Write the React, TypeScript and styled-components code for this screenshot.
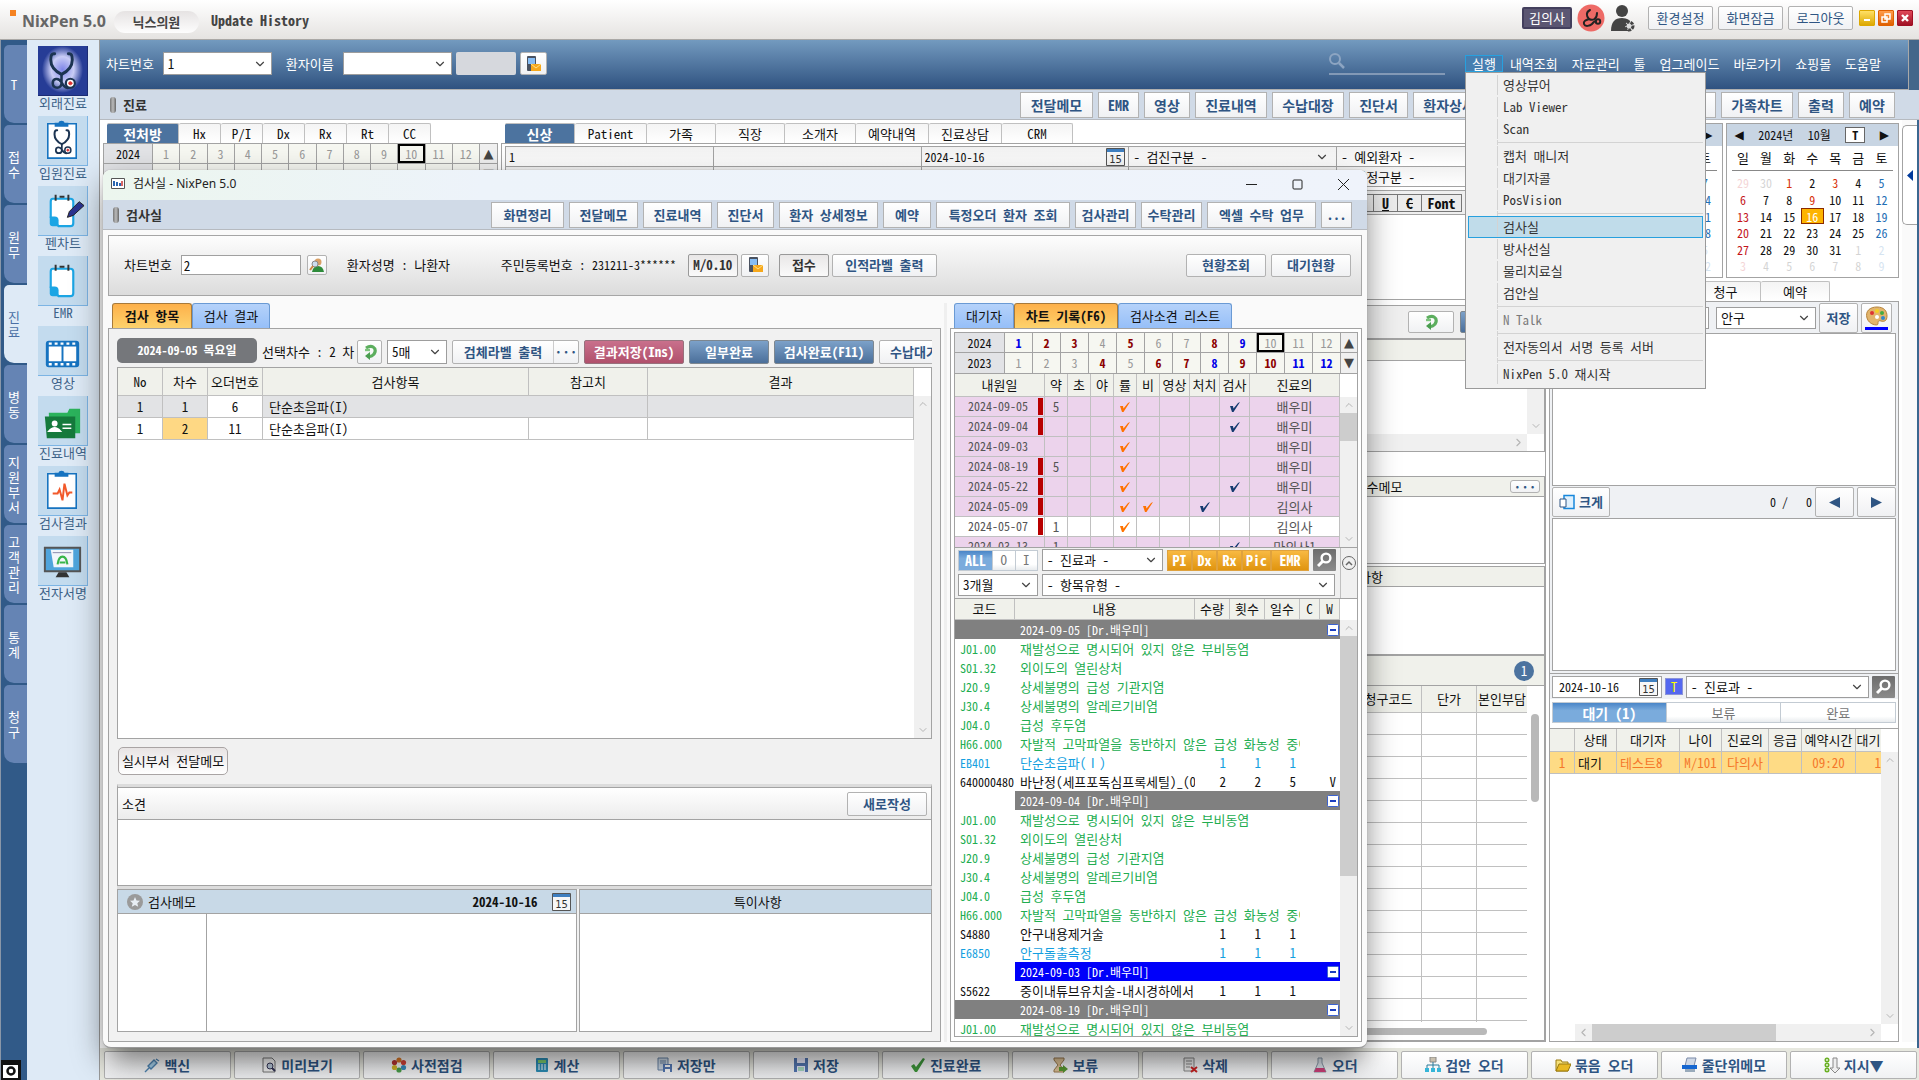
import React from "react";
import styled, { createGlobalStyle, css } from "styled-components";
import { ChevronDown, ChevronUp, ChevronLeft, ChevronRight } from "lucide-react";

const FONT = `"Noto Sans Mono CJK KR", "Noto Sans CJK KR", "Liberation Sans", sans-serif`;
const line = "#a3a3a3";
const soft = "#c0c0c0";
const navy = "#2f5583";
const beige = "#f0f1eb";

const Global = createGlobalStyle`
  *, *::before, *::after { box-sizing: border-box; }
  body { margin: 0; background: #fff; font: 13px/16px ${FONT}; color: #111; }
  button, input, select, textarea { font: inherit; color: inherit; margin: 0; padding: 0; border-radius: 0; }
  ul { list-style: none; margin: 0; padding: 0; }
  h1, h2, p { margin: 0; font-size: 13px; line-height: 16px; }
  svg { display: block; flex: none; }
`;

/* ---------- shell ---------- */
const Shell = styled.div`
  display: flex;
  flex-direction: column;
  height: 100vh;
  overflow: hidden;
  white-space: nowrap;
`;
const TopBar = styled.header`
  flex: none;
  height: 40px;
  display: flex;
  align-items: center;
  padding: 0 6px 4px 10px;
  background: linear-gradient(#fff, #e5e3e1);
  border-bottom: 1px solid #aaa8a6;
`;
const Brand = styled.div`
  display: flex;
  gap: 6px;
  font: bold 16px/22px "Noto Sans", "Open Sans", sans-serif;
  color: #666;
  margin-top: 6px;
  &::before { content: ""; width: 6px; height: 6px; background: #f58220; }
`;
const ClinicPill = styled.span`
  margin: 8px 12px 0 8px;
  width: 85px;
  height: 22px;
  border-radius: 11px;
  background: linear-gradient(#e6e3e3, #fdfdfd);
  text-align: center;
  font: bold 13px/21px ${FONT};
  color: #444;
`;
const History = styled.strong`
  font-size: 14px;
  margin-top: 4px;
  color: #444;
`;
const TopTools = styled.div`
  margin-left: auto;
  display: flex;
  align-items: center;
  gap: 5px;
`;
const UserChip = styled.span`
  height: 22px;
  padding: 0 5px;
  border: 2px solid #433f5d;
  border-radius: 2px;
  background: #5b5672;
  color: #fff;
  line-height: 18px;
`;
const WinBtns = styled.span`
  display: flex;
  gap: 3px;
  margin-left: 1px;
`;
const WinBtn = styled.button<{ $c: string; $d: string }>`
  width: 16px;
  height: 16px;
  border: 1px solid ${(p) => p.$d};
  border-radius: 1px;
  background: linear-gradient(${(p) => p.$c}, ${(p) => p.$d});
  display: grid;
  place-items: center;
`;
const Body = styled.div`
  flex: 1;
  min-height: 0;
  display: flex;
`;

/* ---------- left navigation ---------- */
const SideTabs = styled.nav`
  flex: none;
  width: 27px;
  background: #315a88;
  border-left: 1px solid #8a97a8;
  padding: 5px 0 0 3px;
  display: flex;
  flex-direction: column;
  gap: 2px;
`;
const SideTab = styled.button<{ $on?: boolean }>`
  height: 78px;
  border: 0;
  border-radius: 5px 0 0 10px;
  background: ${(p) => (p.$on ? "#deeaf6" : "#6584b4")};
  color: ${(p) => (p.$on ? "#4a6fa5" : "#fff")};
  display: flex;
  flex-direction: column;
  align-items: center;
  justify-content: center;
  padding-right: 3px;
  line-height: 15px;
`;
const TabFoot = styled.div`
  margin: auto 0 0 -3px;
  width: 20px;
  height: 20px;
`;
const SideIcons = styled.nav`
  flex: none;
  width: 73px;
  background: #deeaf6;
  border-right: 1px solid #9a9a9a;
  padding: 6px 11px;
  display: flex;
  flex-direction: column;
  align-items: center;
`;
const SideItem = styled.button<{ $on?: boolean }>`
  height: 70px;
  width: 50px;
  border: 0;
  background: none;
  color: #3d6288;
  display: flex;
  flex-direction: column;
  align-items: center;
  line-height: 13px;
  & > svg {
    background: ${(p) => (p.$on ? "#263c96" : "#c3dbee")};
    border: solid;
    border-width: 0 1px 1px 0;
    border-color: ${(p) => (p.$on ? "#1c2c74" : "#7cb4e4")};
  }
`;

/* ---------- shared controls ---------- */
const Btn = styled.button<{ $w?: number; $h?: number; $tone?: string; $r?: number; $big?: boolean }>`
  flex: none;
  display: inline-flex;
  align-items: center;
  justify-content: center;
  gap: 4px;
  ${(p) => p.$w && css`width: ${p.$w}px;`}
  height: ${(p) => p.$h || 24}px;
  border: 1px solid #b2b2b2;
  border-radius: ${(p) => (p.$r === undefined ? 2 : p.$r)}px;
  background: linear-gradient(#fff, #f0f1f3);
  color: ${navy};
  font-weight: bold;
  font-size: ${(p) => (p.$big ? 14 : 13)}px;
  ${(p) => p.$tone === "blue" && css`background: linear-gradient(#7ca1c9, #4b6f9a); color: #fff; border-color: #7d8790;`}
  ${(p) => p.$tone === "rose" && css`background: linear-gradient(#c9708c, #b0506c); color: #fff; border-color: #97707c;`}
  ${(p) => p.$tone === "grey" && css`background: linear-gradient(#e9e7e7, #fafafa); color: #333; border-color: #999;`}
  ${(p) => p.$tone === "plain" && css`font-weight: normal;`}
`;
const PickWrap = styled.span<{ $w?: number; $h?: number; $flat?: boolean }>`
  display: inline-grid;
  flex: none;
  width: ${(p) => (p.$w ? p.$w + "px" : "auto")};
  height: ${(p) => p.$h || 22}px;
  border: ${(p) => (p.$flat ? "0" : "1px solid #9d9d9d")};
  background: ${(p) => (p.$flat ? "transparent" : "#fff")};
  color: #111;
  & > * { grid-area: 1 / 1; min-width: 0; }
  & > svg { align-self: center; justify-self: end; margin-right: 4px; pointer-events: none; color: #444; }
  select { appearance: none; border: 0; background: transparent; padding: 0 4px; outline: 0; width: 100%; }
`;
const Pick = ({ v, label, w, h, flat, id }: { v: string; label?: string; w?: number; h?: number; flat?: boolean; id?: string }) => (
  <PickWrap $w={w} $h={h} $flat={flat}>
    <select aria-label={label} id={id}><option>{v}</option></select>
    <ChevronDown size={14} />
  </PickWrap>
);
const TextBox = styled.input<{ $w: number; $h: number }>`
  flex: none;
  width: ${(p) => p.$w}px;
  height: ${(p) => p.$h}px;
  border: 1px solid #a0a0a0;
  background: #fff;
  color: #111;
  padding: 0 2px;
`;

/* ---------- scroll bars ---------- */
const Track = styled.div<{ $row?: boolean }>`
  flex: none;
  display: flex;
  flex-direction: ${(p) => (p.$row ? "row" : "column")};
  align-items: center;
  justify-content: space-between;
  ${(p) => (p.$row ? "height: 17px; padding: 0 2px;" : "width: 17px; padding: 2px 0;")}
  background: #f0f0f0;
  color: #b5b5b5;
`;
const Thumb = styled.div<{ $size: string; $row?: boolean }>`
  ${(p) => (p.$row ? `width: ${p.$size}; height: 17px;` : `height: ${p.$size}; width: 17px;`)}
  margin: 2px;
  background: #cdcdcd;
`;
const Fill = styled.div`flex: 1; min-width: 0; min-height: 0;`;
const VScroll = ({ thumb }: { thumb?: string }) => (
  <Track>
    <ChevronUp size={12} />
    {thumb && <Thumb $size={thumb} />}
    <Fill />
    <ChevronDown size={12} />
  </Track>
);
const HScroll = ({ thumb }: { thumb?: string }) => (
  <Track $row>
    <ChevronLeft size={13} />
    {thumb && <Thumb $row $size={thumb} />}
    <Fill />
    <ChevronRight size={13} />
  </Track>
);

/* ---------- main column ---------- */
const Main = styled.main`
  position: relative;
  flex: 1;
  min-width: 0;
  display: flex;
  flex-direction: column;
`;
const Toolbar = styled.div`
  flex: none;
  height: 50px;
  display: flex;
  align-items: center;
  padding: 0 20px 2px 6px;
  margin-right: 10px;
  background: linear-gradient(#739abf, #2f5280);
  border-right: 1px solid #a9a9a9;
  border-bottom: 1px solid #b0b0b0;
  box-shadow: 10px 0 #44668a;
  color: #fff;
  label { margin-right: 9px; }
`;
const DeadBox = styled.span`
  width: 60px;
  height: 23px;
  margin: 0 4px;
  border-radius: 2px;
  background: #d6d8dd;
`;
const Search = styled.span`
  width: 116px;
  margin-left: auto;
  margin-right: 20px;
  height: 22px;
  border-bottom: 2px solid #8299b6;
`;
const MenuBar = styled.nav`
  display: flex;
  position: relative;
`;
const MenuTop = styled.button<{ $on?: boolean }>`
  height: 17px;
  padding: 0 6px;
  border: 1px solid ${(p) => (p.$on ? "#27a0de" : "transparent")};
  background: ${(p) => (p.$on ? "#467eb0" : "none")};
  line-height: 14px;
`;
const Drop = styled.ul`
  position: absolute;
  z-index: 5;
  left: 0;
  top: 17px;
  width: 241px;
  padding: 1px 2px 3px;
  background: #f0f0f0;
  border: 1px solid #9a9a9a;
  color: #333;
`;
const DropItem = styled.button<{ $on?: boolean; $off?: boolean }>`
  display: flex;
  width: 100%;
  height: 22px;
  padding: 0 0 0 28px;
  border: 1px solid ${(p) => (p.$on ? "#27a0de" : "transparent")};
  background: ${(p) => (p.$on ? "#c0dcea" : "none")};
  color: ${(p) => (p.$off ? "#7a7a7a" : "#333")};
  line-height: 20px;
  span { border-left: 1px solid #d3d3d3; padding-left: 5px; }
`;
const DropRule = styled.li`
  height: 5px;
  margin-left: 29px;
  border-left: 1px solid #d3d3d3;
  background: linear-gradient(#d3d3d3, #d3d3d3) 0 2px / 100% 1px no-repeat;
`;
const SectionBar = styled.div<{ $pad?: number }>`
  flex: none;
  height: 30px;
  display: flex;
  align-items: center;
  gap: 5px;
  padding: 0 ${(p) => p.$pad}px 0 10px;
  background: #d0dae7;
  border-bottom: 1px solid #b6bac0;
`;
const Grip = styled.i`
  width: 6px;
  height: 16px;
  border-radius: 3px;
  background: linear-gradient(90deg, #777, #bbb, #666);
`;
const SectionTitle = styled.h2`
  margin: 0 auto 0 2px;
  color: #333;
`;
const Content = styled.div`
  flex: 1;
  min-height: 0;
  display: flex;
  gap: 3px;
  padding: 3px 0 6px 3px;
  background: #fff;
  border-right: 2px solid #3b6790;
`;
const Col = styled.section<{ $w?: number }>`
  ${(p) => (p.$w ? css`flex: none; width: ${p.$w}px;` : css`flex: 1;`)}
  min-width: 0;
  min-height: 0;
  display: flex;
  flex-direction: column;
`;
const Tabs = styled.div`
  flex: none;
  display: flex;
  padding-left: 4px;
  height: 20px;
`;
const Tab = styled.button<{ $w: number; $on?: boolean }>`
  width: ${(p) => p.$w}px;
  border: 1px solid ${soft};
  border-width: 1px 1px 0 0;
  border-radius: 2px 2px 0 0;
  background: ${(p) => (p.$on ? "#4c739f" : "linear-gradient(#f4f4f4, #fff)")};
  color: ${(p) => (p.$on ? "#fff" : "#111")};
  font-weight: ${(p) => (p.$on ? "bold" : "normal")};
  font-size: ${(p) => (p.$on ? 14 : 13)}px;
  line-height: 18px;
`;
const Panel = styled.div<{ $pad?: string; $bg?: string }>`
  flex: 1;
  min-height: 0;
  display: flex;
  flex-direction: column;
  border: 1px solid ${line};
  padding: ${(p) => p.$pad || "0"};
  background: ${(p) => p.$bg || "#fff"};
`;

/* ---------- tables ---------- */
const Table = styled.table`
  width: 100%;
  border-collapse: separate;
  border-spacing: 0;
  table-layout: fixed;
  th { font-weight: normal; padding: 0; overflow: hidden; }
  td { padding: 0; overflow: hidden; text-align: center; }
`;
const YearTable = styled(Table)`
  flex: none;
  font-size: 12px;
  border: solid ${line};
  border-width: 1px 0 0 1px;
  th, td { height: 20px; border: solid ${line}; border-width: 0 1px 1px 0; }
  tr + tr > * { height: 21px; }
  th { background: #e2e3e6; }
  td { background: #f6f7f1; color: #999; }
  td.b { color: #0000e8; font-weight: bold; }
  td.r { color: #8b0000; font-weight: bold; }
  td.now { box-shadow: inset 0 0 0 2px #000; }
  td.arrow { background: #f0f0f0; color: #444; font: 13px/16px "DejaVu Sans", sans-serif; }
`;
const YearGrid = ({ years, first, last }: { years: [string, string][]; first: number; last: number }) => (
  <YearTable>
    <colgroup>
      <col style={{ width: first }} />
      {Array.from({ length: 12 }, (_, i) => <col key={i} />)}
      <col style={{ width: last }} />
    </colgroup>
    <tbody>
      {years.map(([y, marks], r) => (
        <tr key={y}>
          <th scope="row">{y}</th>
          {marks.split("").map((m, i) => (
            <td key={i} className={m === "b" ? "b" : m === "r" ? "r" : m === "n" ? "now" : ""}>{i + 1}</td>
          ))}
          <td className="arrow">{r ? "▼" : "▲"}</td>
        </tr>
      ))}
    </tbody>
  </YearTable>
);

/* ---------- background form ---------- */
const FormGrid = styled.div`
  flex: none;
  display: grid;
  grid-template-columns: repeat(5, 1fr);
  border: solid ${line};
  border-width: 1px 0 0 1px;
`;
const FormCell = styled.div`
  height: 20px;
  display: flex;
  align-items: center;
  justify-content: space-between;
  padding: 0 3px 0 0;
  border: solid ${line};
  border-width: 0 1px 1px 0;
  background: linear-gradient(#f1f1f1, #fff);
  & > input { border: 0; background: none; width: 100px; height: 18px; padding: 0 3px; font-size: 12px; }
  & > span { flex: 1; }
`;
const RichBar = styled.div`
  flex: none;
  height: 25px;
  margin-top: 3px;
  padding: 3px 83px 0 0;
  display: flex;
  justify-content: flex-end;
  background: #efefef;
  border: 1px solid ${line};
`;
const RichBtn = styled.button<{ $w: number }>`
  width: ${(p) => p.$w}px;
  height: 18px;
  margin-right: -1px;
  border: 1px solid #777;
  background: #ececec;
  font-weight: bold;
  font-size: 14px;
  line-height: 15px;
`;
const Area = styled.div<{ $h?: number; $grow?: boolean }>`
  ${(p) => (p.$grow ? css`flex: 1; min-height: 0;` : css`flex: none; height: ${p.$h}px;`)}
  border: 1px solid ${line};
  border-top: 0;
  background: #fff;
`;
const ActionBar = styled.div`
  flex: none;
  height: 34px;
  margin-top: 5px;
  padding: 0 39px 0 0;
  display: flex;
  align-items: center;
  justify-content: flex-end;
  gap: 6px;
  background: #efefef;
  border: 1px solid ${line};
`;
const BeigeHead = styled.div<{ $h: number }>`
  flex: none;
  height: ${(p) => p.$h}px;
  display: flex;
  align-items: center;
  justify-content: space-between;
  padding: 0 4px;
  background: ${beige};
  border: 1px solid ${line};
`;
const ScrollArea = styled.div`
  flex: none;
  height: 91px;
  display: grid;
  grid-template-columns: 1fr 17px;
  grid-template-rows: 1fr 17px;
  border: 1px solid ${line};
  border-top: 0;
`;
const Right = styled.div`
  width: 215px;
  margin-left: auto;
  display: flex;
  flex-direction: column;
  flex: none;
`;
const Count = styled.span`
  width: 20px;
  height: 20px;
  margin-right: 6px;
  border-radius: 50%;
  background: #4c739f;
  color: #fff;
  text-align: center;
  line-height: 19px;
`;
const MiniDots = styled(Btn)`
  height: 13px;
  width: 30px;
  border-radius: 3px;
  line-height: 8px;
`;
const Spacer = styled.div<{ $h: number }>`flex: none; height: ${(p) => p.$h}px;`;
const OrderWrap = styled.div`
  flex: 1;
  min-height: 0;
  display: grid;
  grid-template-columns: 1fr 17px;
  grid-template-rows: minmax(0, 1fr) 18px;
  border: 1px solid ${line};
  border-top: 0;
`;
const OrderTable = styled(Table)`
  th { height: 27px; background: ${beige}; border: solid ${soft}; border-width: 0 1px 1px 0; }
  td { height: 22px; border: solid ${soft}; border-width: 0 1px 1px 0; }
  th:last-child, td:last-child { border-right: 0; }
`;
const Clip = styled.div`flex: 1; min-width: 0; overflow: hidden;`;
const PillTrack = styled.div`
  padding: 28px 5px 0 4px;
  &::before { content: ""; display: block; height: 88px; border-radius: 4px; background: #b9b9b9; }
`;
const PillRow = styled.div`
  padding: 6px 40px 0 4px;
  &::before { content: ""; display: block; height: 7px; border-radius: 4px; background: #b9b9b9; }
`;

/* ---------- calendars ---------- */
const CalPair = styled.div`
  flex: none;
  display: grid;
  grid-template-columns: 1fr 1fr;
  gap: 3px;
  margin-bottom: 3px;
`;
const Cal = styled.div`
  height: 155px;
  border: 1px solid ${line};
`;
const CalHead = styled.div`
  height: 22px;
  display: flex;
  align-items: center;
  justify-content: space-between;
  padding: 0 9px 0 8px;
  font-size: 12px;
  background: #c8d5e3;
  span { font: 12px/16px "DejaVu Sans", sans-serif; }
  button { width: 20px; height: 16px; border: 1px solid #666; background: #fff; font-weight: bold; line-height: 12px; }
`;
const CalTable = styled(Table)`
  padding: 0 5px;
  font-size: 12px;
  th { height: 25px; border-bottom: 1px solid #888; font-size: 13px; }
  td { height: 16px; line-height: 15px; }
  tbody tr:first-child td { height: 20px; padding-top: 3px; }
  tbody tr:nth-child(even) td { height: 17px; }
  td:first-child { color: #c4161c; }
  td:last-child { color: #1f6fb5; }
  td.h { color: #d8320a; }
  td.o { opacity: 0.18; }
  td.t { background: #fdb400; color: #fff; box-shadow: inset 0 0 0 1px #8a2a00; }
`;
const weeks = (s: string) => s.trim().split(/\s+/).reduce<string[][]>((a, d, i) => {
  if (i % 7 === 0) a.push([]);
  a[a.length - 1].push(d);
  return a;
}, []);
const Calendar = ({ year, month, days }: { year: string; month: string; days: string }) => (
  <Cal>
    <CalHead><span>◀</span>{year}<time>{month}</time><button>T</button><span>▶</span></CalHead>
    <CalTable>
      <thead><tr>{"일월화수목금토".split("").map((d) => <th key={d} scope="col">{d}</th>)}</tr></thead>
      <tbody>
        {weeks(days).map((w, i) => (
          <tr key={i}>{w.map((d, j) => <td key={j} className={/[a-z]/.test(d) ? d.replace(/\d/g, "") : ""}>{d.replace(/\D/g, "")}</td>)}</tr>
        ))}
      </tbody>
    </CalTable>
  </Cal>
);

const SideBox = styled.div`
  flex: none;
  display: flex;
  flex-direction: column;
  border: 1px solid ${line};
  padding: 0 2px 2px;
  background: #eff1f4;
`;
const SideRow = styled.div<{ $h: number }>`
  height: ${(p) => p.$h}px;
  display: flex;
  align-items: center;
  justify-content: flex-end;
  gap: 3px;
  & > .first { margin-right: auto; }
`;
const WaitRow = styled(SideRow)`
  flex: none;
  padding: 0 3px 0 2px;
  background: #eff1f4;
`;
const Canvas = styled.div`
  height: 153px;
  border: 1px solid ${line};
  background: #fff;
`;
const Palette = styled(Btn)`
  &::after { content: ""; width: 23px; height: 3px; background: #00f; margin-top: -3px; }
  flex-direction: column;
`;
const DateBox = styled.span`
  display: flex;
  align-items: center;
  justify-content: space-between;
  width: 110px;
  height: 22px;
  padding: 0 3px 0 0;
  margin-right: auto;
  border: 1px solid ${line};
  background: #fff;
  input { width: 76px; border: 0; padding: 0 6px; font-size: 12px; }
`;
const BlueT = styled.button`
  width: 18px;
  height: 17px;
  border: 1px solid #8b93d8;
  background: #5468f0;
  color: #ff0;
  line-height: 14px;
`;
const DarkBtn = styled.button`
  width: 23px;
  height: 22px;
  border: 0;
  border-radius: 1px;
  background: linear-gradient(#6d6d6d, #8b8b8b);
  display: grid;
  place-items: center;
`;
const Segments = styled.div`
  flex: none;
  display: grid;
  grid-template-columns: repeat(3, 1fr);
  height: 21px;
  margin: 3px 2px 5px;
`;
const Segment = styled.button<{ $on?: boolean }>`
  border: 1px solid #c3cbd3;
  border-left-width: ${(p) => (p.$on ? 1 : 0)}px;
  background: ${(p) => (p.$on ? "linear-gradient(#4a86c8, #7aabdc 40%)" : "linear-gradient(#fff 70%, #e8ebee)")};
  color: ${(p) => (p.$on ? "#fff" : "#777")};
  font-weight: ${(p) => (p.$on ? "bold" : "normal")};
  font-size: ${(p) => (p.$on ? 14 : 13)}px;
  line-height: 18px;
`;
const WaitBox = styled.div`
  flex: 1;
  min-height: 0;
  display: flex;
  flex-direction: column;
  border: 1px solid ${line};
  border-top: 0;
  background: #fff;
`;
const WaitBody = styled.div`
  flex: 1;
  min-height: 0;
  display: flex;
  border-top: 1px solid ${line};
`;
const WaitTable = styled(Table)`
  th, td { height: 22px; border: solid ${soft}; border-width: 0 1px 1px 0; }
  th { height: 23px; background: ${beige}; }
  td { background: #fedb85; color: #f5772a; }
  td:nth-child(2) { color: #111; text-align: left; padding-left: 3px; }
  td:nth-child(3) { text-align: left; padding-left: 3px; }
  td:last-child { text-align: right; }
  th:last-child, td:last-child { border-right: 0; }
`;
const HScrollRow = styled.div`
  flex: none;
  display: grid;
  grid-template-columns: 25px 1fr 17px;
`;
const Strip = styled.aside`
  flex: none;
  width: 15px;
  margin: -3px 0 0;
  padding-top: 5px;
  background: #fafafa;
`;
const StripTab = styled.button`
  height: 100px;
  width: 15px;
  border: 1px solid ${line};
  border-right: 0;
  border-radius: 5px 0 0 5px;
  background: #fff;
  display: grid;
  place-items: center;
`;

/* ---------- bottom bar ---------- */
const BottomBar = styled.footer`
  flex: none;
  height: 32px;
  display: grid;
  grid-template-columns: repeat(14, 1fr);
  gap: 3px;
  padding: 3px 2px 1px 4px;
  background: #e7e8df;
`;
const FootBtn = styled(Btn)`
  width: auto;
  height: 28px;
`;

/* ---------- exam window ---------- */
const Win = styled.section`
  position: absolute;
  z-index: 2;
  left: 3px;
  right: 552px;
  top: 130px;
  bottom: 32px;
  display: flex;
  flex-direction: column;
  overflow: hidden;
  border-radius: 8px;
  background: #fafafa;
  border-bottom: 1px solid #999;
`;
const WinShadow = styled(Win)`
  z-index: 1;
  overflow: visible;
  box-shadow: 0 0 1px #777, 0 12px 32px rgba(0, 0, 0, 0.4), 0 24px 24px -12px rgba(0, 0, 0, 0.25);
`;
const WinTitle = styled.header`
  flex: none;
  height: 30px;
  display: flex;
  align-items: center;
  gap: 6px;
  padding: 0 16px 2px 8px;
  background: linear-gradient(90deg, #ecf6ee, #edf3fa 30%, #eff3fb);
  h1 { font: 12px/16px "Noto Sans", "Noto Sans CJK KR", sans-serif; margin-right: auto; color: #222; }
  button { width: 16px; height: 16px; margin-left: 24px; border: 0; background: none; display: grid; place-items: center; }
`;
const Patient = styled.div`
  flex: none;
  height: 61px;
  margin: 5px 5px 0;
  padding: 0 10px 1px 15px;
  display: flex;
  align-items: center;
  border: 1px solid #a6a6a6;
  background: linear-gradient(#fdfdfd, #dcdcdc);
  label { margin-right: 9px; }
`;
const Info = styled.span<{ $w: number }>`width: ${(p) => p.$w}px; flex: none;`;
const Digits = styled.span`font-size: 12px;`;
const Gap = styled.i<{ $w: number }>`width: ${(p) => p.$w}px; flex: none;`;
const WinBody = styled.div`
  flex: 1;
  min-height: 0;
  display: grid;
  grid-template-columns: 1fr 3px 412px;
  grid-template-rows: minmax(0, 1fr);
  column-gap: 3px;
  padding: 7px 5px 5px;
`;
const Splitter = styled.div`background: #efefef;`;
const BigTabs = styled.div`
  flex: none;
  display: flex;
  height: 25px;
  padding-left: 4px;
`;
const BigTab = styled.button<{ $w: number; $on?: boolean }>`
  width: ${(p) => p.$w}px;
  border: 1px solid ${(p) => (p.$on ? "#a77a3b" : "#6a9ad4")};
  border-bottom: 0;
  border-radius: 3px 3px 0 0;
  background: ${(p) => (p.$on ? "linear-gradient(#fdb04a, #fdd26c)" : "linear-gradient(#b5d2fa, #96bff8)")};
  font-weight: ${(p) => (p.$on ? "bold" : "normal")};
`;
const ExamBar = styled.div`
  flex: none;
  display: flex;
  align-items: center;
  gap: 5px;
  height: 30px;
  overflow: hidden;
`;
const DateChip = styled.span`
  flex: none;
  width: 140px;
  height: 25px;
  margin-bottom: 4px;
  border-radius: 5px;
  background: #75777b;
  color: #fff;
  font-weight: bold;
  font-size: 12px;
  line-height: 24px;
  text-align: center;
`;
const SplitBtn = styled(Btn)`
  gap: 0;
  span { flex: 1; text-align: center; }
  span + span { flex: none; width: 25px; border-left: 1px solid #ccc; line-height: 22px; }
`;
const ExamBox = styled.div`
  flex: 1;
  min-height: 0;
  display: flex;
  border: 1px solid ${line};
  background: #fff;
`;
const ExamTable = styled(Table)`
  th { height: 28px; background: ${beige}; border: solid ${soft}; border-width: 0 1px 1px 0; }
  td { height: 22px; border: solid ${soft}; border-width: 0 1px 1px 0; }
  td:nth-child(4) { text-align: left; padding-left: 6px; }
  tr.sel td { background: #e2e3e5; }
  tr.sel td:nth-child(3) { background: #fff; }
  tr.sel td:nth-child(4) { border-right: 0; }
  td.hot { background: #fed884; }
`;
const ScrollSlot = styled.div<{ $top?: number }>`
  flex: none;
  padding-top: ${(p) => p.$top || 28}px;
  display: flex;
  & > div { height: 100%; }
`;
const MemoBtn = styled.button`
  flex: none;
  align-self: flex-start;
  width: 110px;
  height: 28px;
  margin: 8px 0 9px 1px;
  border: 1px solid #a9a4a4;
  border-radius: 5px;
  background: linear-gradient(#e8e4e4, #fff);
`;
const Opinion = styled.div`
  flex: none;
  height: 102px;
  border: 1px solid ${line};
  border-top: 3px solid #dcdcdc;
  background: #fff;
  header {
    height: 33px;
    display: flex;
    align-items: center;
    justify-content: space-between;
    padding: 0 4px;
    border: solid ${line};
    border-width: 1px 0;
    background: linear-gradient(#fff, #ececec);
  }
`;
const Memos = styled.div`
  flex: none;
  height: 146px;
  display: grid;
  grid-template-columns: 461fr 353fr;
  gap: 2px;
  border-top: 3px solid #dcdcdc;
`;
const Memo = styled.div`
  display: flex;
  flex-direction: column;
  border: 1px solid ${line};
  background: #fff;
  header {
    height: 24px;
    display: flex;
    align-items: center;
    gap: 5px;
    padding: 0 5px 0 9px;
    background: #c8d9e7;
    border-bottom: 1px solid ${line};
  }
  strong { margin-left: auto; margin-right: 10px; }
  .mid { flex: 1; text-align: center; }
`;
const MemoDates = styled.div`
  flex: 1;
  width: 89px;
  border-right: 1px solid ${line};
`;

/* ---------- chart record side ---------- */
const VisitBox = styled.div`
  flex: none;
  height: 174px;
  display: flex;
  overflow: hidden;
  border: solid ${line};
  border-width: 0 1px 1px;
  & > div { align-self: stretch; }
`;
const VisitTable = styled(Table)`
  th { height: 23px; background: ${beige}; border: solid ${soft}; border-width: 0 1px 1px 0; }
  td { height: 20px; background: #ecd3ec; border: solid ${soft}; border-width: 0 1px 1px 0; color: #555; }
  tr.w td { background: #fff; }
  td svg { margin: 0 auto; }
`;
const VisitDate = styled.div<{ $bar: boolean }>`
  height: 19px;
  font-size: 12px;
  line-height: 18px;
  padding-right: 3px;
  background: ${(p) => (p.$bar ? "linear-gradient(#b80000, #b80000) right 1px center / 5px 17px no-repeat" : "none")};
`;
const Filters = styled.div`
  flex: none;
  display: grid;
  grid-template-columns: 1fr 17px;
  background: #f0f0f0;
  border: solid ${line};
  border-width: 0 1px;
  height: 50px;
`;
const FilterRows = styled.div`
  display: flex;
  flex-direction: column;
  gap: 3px;
  padding: 1px 4px 0 3px;
  border-right: 1px solid ${soft};
  & > div { display: flex; gap: 4px; align-items: center; height: 22px; }
`;
const TinySeg = styled.span`
  display: grid;
  grid-template-columns: 35px 1fr 1fr;
  width: 80px;
  height: 21px;
`;
const Orange = styled.span`
  display: grid;
  grid-template-columns: 25fr 25fr 25fr 29fr 38fr;
  width: 142px;
  height: 21px;
  button {
    border: 1px solid #dfa23e;
    background: linear-gradient(#f8b942, #e0940f);
    color: #fff;
    font-weight: bold;
    font-size: 14px;
    line-height: 17px;
  }
`;
const RxBox = styled.div`
  flex: 1;
  min-height: 0;
  display: flex;
  border: 1px solid ${line};
`;
const RxTable = styled(Table)`
  th { height: 21px; background: ${beige}; border: solid ${soft}; border-width: 0 1px 1px 0; }
  td { height: 19px; line-height: 18px; white-space: pre; text-align: right; padding-right: 4px; }
  td:first-child { text-align: left; padding: 0 0 0 5px; font-size: 12px; }
  td:nth-child(2) { text-align: left; padding: 0 0 0 5px; }
  tr.g td { color: #22ad50; }
  tr.c td { color: #149fe0; }
`;
const GroupRow = styled.tr<{ $c: string; $full: boolean }>`
  && td { background: ${(p) => p.$c}; color: #fff; }
  && td:first-child { background: ${(p) => (p.$full ? p.$c : "#fff")}; }
  && td:nth-child(2) { font-size: 12px; }
  && td:nth-child(2) > div { display: flex; justify-content: space-between; align-items: center; padding-right: 1px; }
`;

/* ---------- drawings ---------- */
const Scope = ({ c = "#1c3452" }: { c?: string }) => (
  <g fill="none" stroke={c} strokeLinecap="round">
    <path d="M17 8h-1c-3 0-3 3-3 6 0 7 5 12 11 15 6-3 11-8 11-15 0-3 0-6-3-6h-1" strokeWidth="3" />
    <path d="M24 29v9c0 6-9 6-9 0 0-5 6-6 9-1 2 4 5 7 9 5" strokeWidth="2.6" />
    <circle cx="33" cy="38" r="4.6" strokeWidth="2.2" fill="#fff" />
    <circle cx="33" cy="38" r="1.6" fill="#d33" stroke="#d33" />
  </g>
);
const Board = ({ children }: { children?: React.ReactNode }) => (
  <>
    <path d="M10 8h29v35H10z" fill="#fff" stroke="#1673c0" strokeWidth="1.6" />
    <path d="M17 7h4c0-3 6-3 6 0h4v4H17z" fill="#1673c0" />
    {children}
  </>
);
const Pad = ({ pen }: { pen?: boolean }) => (
  <>
    <path d="M15 13h18q3 0 3 3v22q0 3-3 3H21l-8-9V16q0-3 2-3z" fill="#fff" stroke="#1ba5e4" strokeWidth="2.2" />
    <path d="M12 31h5q4 0 4 4v6h-6q-3 0-3-3z" fill="#1ba5e4" />
    <path d="M18 9v6M31 9v6M22 11h5" stroke="#333" strokeWidth="2" />
    {pen && <path d="M30 32l2-6 10-10 5 4-11 10z" fill="#2a3390" stroke="#222" />}
  </>
);
const SideArt = ({ k }: { k: number }) => (
  <svg width="50" height="50" viewBox="0 0 50 50">
    {k === 0 && (
      <>
        <defs><radialGradient id="glow"><stop offset="0" stopColor="#7f86e8" /><stop offset=".55" stopColor="#c9cdf6" /><stop offset="1" stopColor="#263c96" /></radialGradient></defs>
        <ellipse cx="25" cy="24" rx="21" ry="24" fill="url(#glow)" /><Scope />
      </>
    )}
    {k === 1 && <Board><g transform="translate(8 9) scale(.68)"><Scope /></g></Board>}
    {k === 2 && <Pad pen />}
    {k === 3 && <Pad />}
    {k === 4 && (
      <>
        <rect x="8" y="15" width="34" height="27" rx="3" fill="#1673c0" />
        <path d="M11 21h13v15H11zM26 21h13v15H26z" fill="#fff" />
        <path d="M11 18h29M11 39h29" stroke="#fff" strokeWidth="2.4" strokeDasharray="3 3" />
      </>
    )}
    {k === 5 && (
      <>
        <path d="M11 17h19l2-4h11v25H12z" fill="#2bb35c" /><path d="M7 21h31v22H9z" fill="#157a3c" />
        <circle cx="17" cy="28" r="3" fill="#fff" /><path d="M11 36q6-7 12 0zM25 29h9M25 33h9" fill="#fff" stroke="#fff" strokeWidth="1.6" />
      </>
    )}
    {k === 6 && <Board><path d="M15 28h5l2-4 3 11 2-17 3 12 2-3h3" fill="none" stroke="#f2592a" strokeWidth="2" /></Board>}
    {k === 7 && (
      <>
        <path d="M7 12h36v24H7z" fill="#4fa4dc" stroke="#555" strokeWidth="2" /><path d="M13 14h23v18H16z" fill="#f2f6fb" />
        <path d="M15 17h19" stroke="#88a" /><path d="M20 29q1-8 5-8t5 8M22 27h6" fill="none" stroke="#39b54a" strokeWidth="2.2" /><path d="M21 37h8l3 5H18z" fill="#333" />
      </>
    )}
  </svg>
);
const PhoneIcon = () => (
  <svg width="18" height="18" viewBox="0 0 18 18"><rect x="3" y="1" width="9" height="15" rx="1" fill="#4a5260" /><rect x="4" y="3" width="7" height="6" fill="#86bdf5" /><path d="M7 9h10v7H7z" fill="#f6a81c" /><path d="M7 9l5 4 5-4" fill="none" stroke="#fde08a" /></svg>
);
const CalIcon = () => (
  <svg width="19" height="18" viewBox="0 0 19 18"><path d="M.5.5h18v17H.5z" fill="#f7f7f7" stroke="#555" /><path d="M1 1h17v3H1z" fill="#3f7fc0" /><text x="9.500" y="15" textAnchor="middle" fontSize="10" fontFamily="DejaVu Sans" fill="#333">15</text></svg>
);
const Refresh = () => (
  <svg width="16" height="16" viewBox="0 0 16 16"><path d="M4 4c6-4 10 0 9 4s-5 5-7 4" fill="none" stroke="#5cae5e" strokeWidth="3.2" /><path d="M8 8v8l-5-4z" fill="#4a9e50" /><path d="M3 6h5" stroke="#7cc47c" strokeWidth="2.4" /></svg>
);
const Lens = () => (
  <svg width="16" height="16" viewBox="0 0 16 16"><circle cx="9" cy="6" r="4.4" fill="none" stroke="#fff" strokeWidth="2.4" /><path d="M6 9l-5 5" stroke="#fff" strokeWidth="3" /></svg>
);
const Tick = ({ c }: { c: string }) => (
  <svg width="10" height="10" viewBox="0 0 10 10"><path d="M0 4h3l.5 2.500L8 1l2-1-6.500 10H2z" fill={c} /></svg>
);
const Minus = () => (
  <svg width="12" height="12" viewBox="0 0 12 12"><rect x=".5" y=".5" width="11" height="11" rx="1" fill="#fff" stroke="#3c63d0" /><path d="M3 6h6" stroke="#1c3fc0" strokeWidth="2" /></svg>
);
const Arrow = ({ left }: { left?: boolean }) => (
  <svg width="11" height="11" viewBox="0 0 10 10"><path d={left ? "M10 0v10L0 5z" : "M0 0v10l10-5z"} fill={navy} /></svg>
);
const footArt: React.ReactNode[] = [
  <path d="M1 15l4-4M4 9l6-6 3 3-6 6zM12 2l3 2" stroke="#4f86b5" fill="#a9d4ee" strokeWidth="1.4" />,
  <><path d="M2 1h9l3 3v11H2z" fill="#f5f5f5" stroke="#777" /><circle cx="9" cy="9" r="3" fill="#bcd" stroke="#335" /><path d="M11 11l3 3" stroke="#335" strokeWidth="2" /></>,
  <g><circle cx="8" cy="3" r="2.600" fill="#e07b28" /><circle cx="12.500" cy="5.500" r="2.600" fill="#d8453a" /><circle cx="12.500" cy="10.500" r="2.600" fill="#3a8fc2" /><circle cx="8" cy="13" r="2.600" fill="#4ba14b" /><circle cx="3.500" cy="10.500" r="2.600" fill="#d6b62a" /><circle cx="3.500" cy="5.500" r="2.600" fill="#b83434" /></g>,
  <><rect x="2" y="1" width="12" height="14" rx="1" fill="#2c8fb8" /><path d="M4 3h8v3H4z" fill="#7fcf6f" /><path d="M4 8h8M4 10h8M4 12h8" stroke="#fff" strokeDasharray="2 1" /></>,
  <><path d="M1 1h10v12H1z" fill="#cfdcea" stroke="#6a86a8" /><path d="M3 4h6M3 6h6" stroke="#6a86a8" /><path d="M6 7h9v8H6z" fill="#5579b5" /><path d="M8 8h5v2H8zM8 12h5v3H8z" fill="#fff" /></>,
  <><path d="M1 1h14v14H1z" fill="#5579b5" /><path d="M4 1h8v5H4zM4 9h8v6H4z" fill="#eef" /><path d="M5 11h6M5 13h6" stroke="#6c8" /></>,
  <path d="M1 9l3-2 2 3 7-9 2 1-8 13H5z" fill="#3f9a3c" />,
  <><path d="M2 1h10v2L8 8l4 5v2H2v-2l4-5-4-5z" fill="#e3c79a" stroke="#9a7a50" /><path d="M7 10h4V8l5 4-5 4v-2H7z" fill="#5a9a32" /></>,
  <><path d="M2 1h10v13H2z" fill="#eee" stroke="#888" /><path d="M4 4h6M4 7h6M4 10h4" stroke="#888" /><path d="M9 10l6 5M15 10l-6 5" stroke="#c22" strokeWidth="2" /></>,
  <><path d="M6 1h4v5l4 9H2l4-9z" fill="#dfe6ee" stroke="#8a9aaa" /><path d="M4 11h8l2 4H2z" fill="#d0407a" /></>,
  <><path d="M5 0h6v5H5z" fill="#c9c0ae" stroke="#888" /><path d="M8 5v3M2 11V8h12v3M8 8v3" stroke="#2a7a9a" fill="none" /><path d="M0 11h4v4H0zM6 11h4v4H6zM12 11h4v4h-4z" fill="#36b5d8" /></>,
  <><path d="M1 3h5l1 2h6v9H1z" fill="#f5e07a" stroke="#9a7a10" /><path d="M4 7h12l-3 7H1z" fill="#e8b923" stroke="#9a7a10" /></>,
  <><path d="M5 1h9l-2 8H3z" fill="#cfd8e6" stroke="#7a8aa8" /><path d="M0 8h15v4H0z" fill="#1566d0" /><path d="M3 12h10v3H3z" fill="#9ab" /></>,
  <><g fill="none" stroke="#6ab023" strokeWidth="1.600"><circle cx="3" cy="3" r="1.700" /><circle cx="3" cy="8" r="1.700" /><circle cx="3" cy="13" r="1.700" /></g><path d="M9 1v10H6l5 5 5-5h-3V1z" fill="#eee" stroke="#888" /></>,
];

/* ---------- data ---------- */
const sideTabs = ["T", "접수", "원무", "진료", "병동", "지원부서", "고객관리", "통계", "청구"];
const sideItems = ["외래진료", "입원진료", "펜차트", "EMR", "영상", "진료내역", "검사결과", "전자서명"];
const menus = ["실행", "내역조회", "자료관리", "툴", "업그레이드", "바로가기", "쇼핑몰", "도움말"];
const drop = ["영상뷰어", "Lab Viewer", "Scan", "-", "캡처 매니저", "대기자콜", "PosVision", "-", "검사실", "방사선실", "물리치료실", "검안실", "-", "N Talk", "-", "전자동의서 서명 등록 서버", "-", "NixPen 5.0 재시작"];
const mainBtns: [string, number][] = [["전달메모", 73], ["EMR", 41], ["영상", 46], ["진료내역", 72], ["수납대장", 72], ["진단서", 59], ["환자상세정보", 98], ["", 200], ["가족차트", 72], ["출력", 46], ["예약", 46]];
const winBtns: [string, number][] = [["화면정리", 73], ["전달메모", 69], ["진료내역", 69], ["진단서", 57], ["환자 상세정보", 99], ["예약", 48], ["특정오더 환자 조회", 134], ["검사관리", 61], ["수탁관리", 61], ["엑셀 수탁 업무", 109], ["...", 31]];
const visits: [string, boolean, string, string, string][] = [
  ["2024-09-05", true, "5", "r---x", "배우미"],
  ["2024-09-04", true, "", "r---x", "배우미"],
  ["2024-09-03", false, "", "r----", "배우미"],
  ["2024-08-19", true, "5", "r----", "배우미"],
  ["2024-05-22", true, "", "r---x", "배우미"],
  ["2024-05-09", true, "", "rr-x-", "김의사"],
  ["2024-05-07", true, "1", "r----", "김의사"],
  ["2024-03-13", false, "1", "----x", "마의사1"],
];
const dx: string[][] = [
  ["g", "J01.00", "재발성으로 명시되어 있지 않은 부비동염"],
  ["g", "S01.32", "외이도의 열린상처"],
  ["g", "J20.9", "상세불명의 급성 기관지염"],
  ["g", "J30.4", "상세불명의 알레르기비염"],
  ["g", "J04.0", "급성 후두염"],
  ["g", "H66.000", "자발적 고막파열을 동반하지 않은 급성 화농성 중이염"],
];
const rx: string[][] = [
  ["G", "2024-09-05", "full"], ...dx,
  ["c", "EB401", "단순초음파(Ⅰ)", "1", "1", "1", "", ""],
  ["k", "640000480", "바난정(세프포독심프록세틸)_(0", "2", "2", "5", "", "V"],
  ["G", "2024-09-04", ""], ...dx,
  ["k", "S4880", "안구내용제거술", "1", "1", "1", "", ""],
  ["c", "E6850", "안구돌출측정", "1", "1", "1", "", ""],
  ["B", "2024-09-03", ""],
  ["k", "S5622", "중이내튜브유치술-내시경하에서", "1", "1", "1", "", ""],
  ["G", "2024-08-19", "full"], dx[0],
];
const footLabels = ["백신", "미리보기", "사전점검", "계산", "저장만", "저장", "진료완료", "보류", "삭제", "오더", "검안 오더", "묶음 오더", "줄단위메모", "지시▼"];
const Cols = ({ w }: { w: (number | null)[] }) => (
  <colgroup>{w.map((n, i) => <col key={i} style={n ? { width: n } : undefined} />)}</colgroup>
);

/* ---------- exam window parts ---------- */
const ExamSide = () => (
  <Col>
    <BigTabs><BigTab $w={80} $on>검사 항목</BigTab><BigTab $w={78}>검사 결과</BigTab></BigTabs>
    <Panel $pad="8px 8px 9px" $bg="#f1f1f1">
      <ExamBar>
        <DateChip>2024-09-05 목요일</DateChip>
        <Info $w={90}>선택차수 : 2 차</Info>
        <Btn $w={25} aria-label="새로고침"><Refresh /></Btn>
        <Pick v="5매" label="매수" w={60} h={24} />
        <SplitBtn $w={127}><span>검체라벨 출력</span><span>···</span></SplitBtn>
        <Btn $w={100} $tone="rose">결과저장(Ins)</Btn>
        <Btn $w={80} $tone="blue">일부완료</Btn>
        <Btn $w={100} $tone="blue">검사완료(F11)</Btn>
        <Btn $w={70}>수납대기</Btn>
      </ExamBar>
      <ExamBox>
        <Clip>
          <ExamTable>
            <Cols w={[45, 45, 55, null, 119, 266]} />
            <thead><tr>{["No", "차수", "오더번호", "검사항목", "참고치", "결과"].map((h) => <th key={h} scope="col">{h}</th>)}</tr></thead>
            <tbody>
              <tr className="sel"><td>1</td><td>1</td><td>6</td><td>단순초음파(I)</td><td /><td /></tr>
              <tr><td>1</td><td className="hot">2</td><td>11</td><td>단순초음파(I)</td><td /><td /></tr>
            </tbody>
          </ExamTable>
        </Clip>
        <ScrollSlot><VScroll /></ScrollSlot>
      </ExamBox>
      <MemoBtn>실시부서 전달메모</MemoBtn>
      <Opinion><header>소견<Btn $w={80}>새로작성</Btn></header></Opinion>
      <Memos>
        <Memo>
          <header>
            <svg width="16" height="16" viewBox="0 0 16 16"><circle cx="8" cy="8" r="8" fill="#9a9a9a" /><path d="M8 3l1.500 3.500 3.500.3-2.700 2.400.9 3.600L8 11l-3.200 1.800.9-3.600L3 6.800l3.500-.3z" fill="#e8eef4" /></svg>
            검사메모<strong>2024-10-16</strong><CalIcon />
          </header>
          <MemoDates />
        </Memo>
        <Memo><header><span className="mid">특이사항</span></header></Memo>
      </Memos>
    </Panel>
  </Col>
);

const ChartSide = () => (
  <Col>
    <BigTabs><BigTab $w={60}>대기자</BigTab><BigTab $w={104} $on>차트 기록(F6)</BigTab><BigTab $w={114}>검사소견 리스트</BigTab></BigTabs>
    <Panel $pad="3px 3px 4px">
      <YearGrid years={[["2024", "brr-r--rbn--"], ["2023", "---r-rrbrrbb"]]} first={50} last={17} />
      <VisitBox>
        <Clip>
          <VisitTable>
            <Cols w={[90, 23, 23, 23, 23, 23, 30, 30, 30, null]} />
            <thead><tr>{["내원일", "약", "초", "야", "률", "비", "영상", "처치", "검사", "진료의"].map((h) => <th key={h} scope="col">{h}</th>)}</tr></thead>
            <tbody>
              {visits.map(([d, bar, n, marks, doc]) => (
                <tr key={d} className={d === "2024-05-07" ? "w" : ""}>
                  <td><VisitDate $bar={bar}>{d}</VisitDate></td><td>{n}</td><td /><td />
                  {marks.split("").map((m, i) => <td key={i}>{m !== "-" && <Tick c={m === "r" ? "#ff7200" : "#153a70"} />}</td>)}
                  <td>{doc}</td>
                </tr>
              ))}
            </tbody>
          </VisitTable>
        </Clip>
        <ScrollSlot $top={23}><VScroll thumb="28px" /></ScrollSlot>
      </VisitBox>
      <Filters>
        <FilterRows>
          <div>
            <TinySeg><Segment $on>ALL</Segment><Segment>O</Segment><Segment>I</Segment></TinySeg>
            <Pick v="- 진료과 -" label="진료과" w={121} />
            <Orange>{["PI", "Dx", "Rx", "Pic", "EMR"].map((t) => <button key={t}>{t}</button>)}</Orange>
            <DarkBtn aria-label="검색"><Lens /></DarkBtn>
          </div>
          <div>
            <Pick v="3개월" label="기간" w={80} />
            <Pick v="- 항목유형 -" label="항목유형" w={293} />
          </div>
        </FilterRows>
        <svg width="16" height="30" viewBox="0 0 16 30"><circle cx="8" cy="15" r="6.500" fill="none" stroke="#666" /><path d="M5 17l3-3 3 3" fill="none" stroke="#666" strokeWidth="1.500" /></svg>
      </Filters>
      <RxBox>
        <Clip>
          <RxTable>
            <Cols w={[60, null, 35, 35, 35, 20, 20]} />
            <thead><tr>{["코드", "내용", "수량", "횟수", "일수", "C", "W"].map((h) => <th key={h} scope="col">{h}</th>)}</tr></thead>
            <tbody>
              {rx.map((r, i) =>
                r[0] === "G" || r[0] === "B" ? (
                  <GroupRow key={i} $c={r[0] === "G" ? "#808080" : "#0000fa"} $full={r[2] === "full"}>
                    <td /><td colSpan={6}><div>{r[1]} [Dr.배우미]<Minus /></div></td>
                  </GroupRow>
                ) : (
                  <tr key={i} className={r[0]}>
                    <td>{r[1]}</td>
                    <td colSpan={r.length === 3 ? 4 : 1}>{r[2]}</td>
                    {r.length === 3 ? <td colSpan={2} /> : r.slice(3).map((c, j) => <td key={j}>{c}</td>)}
                  </tr>
                )
              )}
            </tbody>
          </RxTable>
        </Clip>
        <ScrollSlot $top={21}><VScroll thumb="240px" /></ScrollSlot>
      </RxBox>
    </Panel>
  </Col>
);

const ExamWindow = () => (
  <>
    <WinShadow as="div" />
    <Win aria-label="검사실">
      <WinTitle>
        <svg width="16" height="12" viewBox="0 0 16 12"><path d="M.5.5h13v10H.5z" fill="#fff" stroke="#555" /><path d="M3 8V3M6 8V4M9 8V5" stroke="#2a66b0" strokeWidth="2" /><path d="M11 8V3" stroke="#c33" strokeWidth="1.500" /></svg>
        <h1>검사실 - NixPen 5.0</h1>
        <button aria-label="최소화"><svg width="11" height="11"><path d="M0 5.500h11" stroke="#222" /></svg></button>
        <button aria-label="최대화"><svg width="11" height="11"><rect x="1" y="1" width="9" height="9" rx="1" fill="none" stroke="#222" /></svg></button>
        <button aria-label="닫기"><svg width="11" height="11"><path d="M0 0l11 11M11 0L0 11" stroke="#222" /></svg></button>
      </WinTitle>
      <SectionBar $pad={15}>
        <Grip /><SectionTitle>검사실</SectionTitle>
        {winBtns.map(([t, w]) => <Btn key={t} $w={w} $h={26} $r={0}>{t}</Btn>)}
      </SectionBar>
      <Patient>
        <label htmlFor="chart2">차트번호</label>
        <TextBox id="chart2" $w={120} $h={20} defaultValue="2" />
        <Gap $w={6} />
        <Btn $w={20} $h={20} aria-label="환자 검색"><svg width="16" height="16" viewBox="0 0 16 16"><circle cx="9" cy="5" r="3.500" fill="#d9a066" /><path d="M3 15q1-6 6-6t6 6z" fill="#2e8b3a" /><circle cx="6" cy="7" r="3" fill="#cde" stroke="#888" /><path d="M4 9l-3 4" stroke="#c84" strokeWidth="2" /></svg></Btn>
        <Gap $w={20} />
        <Info $w={154}>환자성명 : 나환자</Info>
        <Info $w={187}>주민등록번호 : <Digits>231211-3******</Digits></Info>
        <Btn $w={50} $h={23} $tone="grey">M/0.10</Btn>
        <Gap $w={3} />
        <Btn $w={28} $h={23} aria-label="문자"><PhoneIcon /></Btn>
        <Gap $w={10} />
        <Btn $w={50} $h={23} $tone="grey">접수</Btn>
        <Gap $w={3} />
        <Btn $w={105} $h={23}>인적라벨 출력</Btn>
        <Fill />
        <Btn $w={80} $h={23}>현황조회</Btn>
        <Gap $w={5} />
        <Btn $w={80} $h={23}>대기현황</Btn>
      </Patient>
      <WinBody><ExamSide /><Splitter /><ChartSide /></WinBody>
    </Win>
  </>
);

/* ---------- background columns ---------- */
const HistoryCol = () => (
  <Col $w={395}>
    <Tabs>
      <Tab $w={72} $on>전처방</Tab>
      {["Hx", "P/I", "Dx", "Rx", "Rt", "CC"].map((t) => <Tab key={t} $w={42}>{t}</Tab>)}
    </Tabs>
    <YearGrid years={[["2024", "---------n--"], ["2023", "------------"]]} first={49} last={18} />
    <Area $grow />
  </Col>
);

const ChartCol = () => (
  <Col>
    <Tabs>
      {([["신상", 70], ["Patient", 72], ["가족", 69], ["직장", 69], ["소개자", 71], ["예약내역", 73], ["진료상담", 73], ["CRM", 71]] as [string, number][]).map(([t, w], i) => <Tab key={t} $w={w} $on={i === 0}>{t}</Tab>)}
    </Tabs>
    <Panel $pad="2px 0 0 3px">
      <FormGrid>
        <FormCell><input aria-label="번호" defaultValue="1" /></FormCell>
        <FormCell />
        <FormCell><input aria-label="날짜" defaultValue="2024-10-16" /><CalIcon /></FormCell>
        <FormCell><Pick flat v="- 검진구분 -" label="검진구분" h={18} /></FormCell>
        <FormCell><Pick flat v="- 예외환자 -" label="예외환자" h={18} /></FormCell>
        <FormCell /><FormCell /><FormCell /><FormCell />
        <FormCell><Pick flat v="- 산정구분 -" label="산정구분" h={18} /></FormCell>
      </FormGrid>
      <RichBar>
        <RichBtn $w={25}>I</RichBtn><RichBtn $w={25}><u>U</u></RichBtn><RichBtn $w={25}><s>C</s></RichBtn><RichBtn $w={41}>Font</RichBtn>
      </RichBar>
      <Area $h={85} />
      <ActionBar><Btn $w={46} $h={22} aria-label="새로고침"><Refresh /></Btn><Btn $w={45} $h={22} $tone="blue" aria-label="입력" /></ActionBar>
      <BeigeHead $h={22} />
      <ScrollArea><div /><VScroll /><HScroll /></ScrollArea>
      <Spacer $h={24} />
      <Right>
        <BeigeHead $h={21}>1. 접수메모<MiniDots>···</MiniDots></BeigeHead>
        <Area $h={67} />
        <Spacer $h={2} />
        <BeigeHead $h={21}>특이사항</BeigeHead>
        <Area $h={68} />
      </Right>
      <BeigeHead $h={31}><span /><Count>1</Count></BeigeHead>
      <OrderWrap>
        <Clip>
          <OrderTable>
            <Cols w={[null, 66, 55, 50]} />
            <thead><tr><th scope="col" /><th scope="col">청구코드</th><th scope="col">단가</th><th scope="col">본인부담</th></tr></thead>
            <tbody>{Array.from({ length: 15 }, (_, i) => <tr key={i}><td /><td /><td /><td /></tr>)}</tbody>
          </OrderTable>
        </Clip>
        <PillTrack />
        <PillRow />
      </OrderWrap>
    </Panel>
  </Col>
);

const WaitCol = () => (
  <Col $w={350}>
    <CalPair>
      <Calendar year="2024년" month="9월" days="1 2 3 4 5 6 7 8 9 10 11 12 13 14 15 16 17 18 19 20 21 22 23 24 25 26 27 28 29 30 1o 2o 3o 4o 5o 6o 7o 8o 9o 10o 11o 12o" />
      <Calendar year="2024년" month="10월" days="29o 30o 1h 2 3h 4 5 6 7 8 9h 10 11 12 13 14 15 16t 17 18 19 20 21 22 23 24 25 26 27 28 29 30 31 1o 2o 3o 4o 5o 6o 7o 8o 9o" />
    </CalPair>
    <Tabs><Tab $w={70}>처방</Tab><Tab $w={68}>내역</Tab><Tab $w={70}>청구</Tab><Tab $w={69}>예약</Tab></Tabs>
    <SideBox>
      <SideRow $h={31}>
        <Pick v="전체" label="종류" w={157} />
        <Gap $w={1} />
        <Pick v="안구" label="부위" w={100} />
        <Btn $w={39} $h={30}>저장</Btn>
        <Palette $w={31} $h={30} aria-label="색상"><svg width="22" height="20" viewBox="0 0 22 20"><path d="M11 1c7 0 10 4 10 9s-3 6-6 5-3 1-3 3-9 1-11-6S4 1 11 1z" fill="#e2b46c" stroke="#b5833c" /><circle cx="6" cy="7" r="2" fill="#d33" /><circle cx="11" cy="5" r="2" fill="#f5d020" /><circle cx="16" cy="7" r="2" fill="#4a4" /><circle cx="17" cy="12" r="2" fill="#38c" /><circle cx="11" cy="11" r="2" fill="#fff" /></svg></Palette>
        <Gap $w={1} />
      </SideRow>
      <Canvas />
      <SideRow $h={32}>
        <Btn className="first" $w={58} $h={30}><svg width="16" height="16" viewBox="0 0 16 16"><path d="M5 1.500h10v13H5z" fill="#dff0fd" stroke="#1787dc" strokeWidth="1.500" /><path d="M1 5h6v8H1z" fill="#fff" stroke="#2f5583" /></svg>크게</Btn>
        <Digits>0 /&nbsp; &nbsp;0</Digits>
        <Btn $w={39} $h={30} aria-label="이전"><Arrow left /></Btn>
        <Btn $w={39} $h={30} aria-label="다음"><Arrow /></Btn>
      </SideRow>
      <Canvas />
    </SideBox>
    <WaitBox>
      <WaitRow $h={25}>
        <DateBox><input aria-label="대기일" defaultValue="2024-10-16" /><CalIcon /></DateBox>
        <BlueT>T</BlueT>
        <Pick v="- 진료과 -" label="대기 진료과" w={183} />
        <DarkBtn aria-label="검색"><Lens /></DarkBtn>
      </WaitRow>
      <Segments><Segment $on>대기 (1)</Segment><Segment>보류</Segment><Segment>완료</Segment></Segments>
      <WaitBody>
        <Clip>
          <WaitTable>
            <Cols w={[25, 42, 63, 42, 47, 33, 54, null]} />
            <thead><tr>{["", "상태", "대기자", "나이", "진료의", "응급", "예약시간", "대기"].map((h) => <th key={h} scope="col">{h}</th>)}</tr></thead>
            <tbody><tr>{["1", "대기", "테스트8", "M/101", "다의사", "", "09:20", "1"].map((c, i) => <td key={i}>{c}</td>)}</tr></tbody>
          </WaitTable>
        </Clip>
        <ScrollSlot $top={23}><VScroll /></ScrollSlot>
      </WaitBody>
      <HScrollRow><span /><HScroll thumb="184px" /><span /></HScrollRow>
    </WaitBox>
  </Col>
);

export default function App() {
  return (
    <Shell>
      <Global />
      <TopBar>
        <Brand>NixPen 5.0</Brand>
        <ClinicPill>닉스의원</ClinicPill>
        <History>Update History</History>
        <TopTools>
          <UserChip>김의사</UserChip>
          <svg width="28" height="28" viewBox="0 0 28 28"><circle cx="14" cy="14" r="13.500" fill="#ee6a66" /><g fill="none" stroke="#222" strokeWidth="2" strokeLinecap="round"><path d="M13 6c-4 2-4 6-1 9 4 2 8 0 8-6" /><path d="M12 15c-3 1-6 2-5 5s6 2 8 0 2-3 4-3" /><circle cx="21" cy="17.500" r="2.200" /></g></svg>
          <svg width="26" height="28" viewBox="0 0 26 28"><circle cx="12" cy="7" r="6" fill="#444" /><path d="M1 27q0-13 11-13 8 0 9 6v7z" fill="#444" /><circle cx="19" cy="22" r="4" fill="#ddd" stroke="#444" strokeWidth="3" strokeDasharray="3 1" /></svg>
          <Gap $w={2} />
          <Btn $w={65} $tone="plain">환경설정</Btn>
          <Btn $w={65} $tone="plain">화면잠금</Btn>
          <Btn $w={65} $tone="plain">로그아웃</Btn>
          <WinBtns>
            <WinBtn $c="#ffe066" $d="#dda800" aria-label="최소화"><svg width="10" height="10"><path d="M2 7h6" stroke="#fff" strokeWidth="2" /></svg></WinBtn>
            <WinBtn $c="#ff9d4d" $d="#e06000" aria-label="창 크기"><svg width="10" height="10"><path d="M4 1h5v5H4zM1 4h5v5H1z" fill="none" stroke="#fff" strokeWidth="1.500" /></svg></WinBtn>
            <WinBtn $c="#e04a5a" $d="#a01024" aria-label="닫기"><svg width="10" height="10"><path d="M2 2l6 6M8 2L2 8" stroke="#fff" strokeWidth="2.400" /></svg></WinBtn>
          </WinBtns>
        </TopTools>
      </TopBar>
      <Body>
        <SideTabs>
          {sideTabs.map((t) => <SideTab key={t} $on={t === "진료"}>{t.split("").map((c, i) => <span key={i}>{c}</span>)}</SideTab>)}
          <TabFoot><svg width="20" height="20" viewBox="0 0 20 20"><rect width="20" height="20" fill="#111" /><path d="M2 5h15v13H2z" fill="#fff" /><circle cx="10" cy="11" r="3.500" fill="none" stroke="#111" strokeWidth="2.500" /></svg></TabFoot>
        </SideTabs>
        <SideIcons>
          {sideItems.map((t, i) => <SideItem key={t} $on={i === 0}><SideArt k={i} />{t}</SideItem>)}
        </SideIcons>
        <Main>
          <Toolbar>
            <label htmlFor="chart">차트번호</label>
            <Pick v="1" id="chart" w={109} h={23} />
            <Gap $w={14} />
            <label htmlFor="name">환자이름</label>
            <Pick v="" id="name" w={109} h={23} />
            <DeadBox />
            <Btn $w={27} $h={23} aria-label="문자"><PhoneIcon /></Btn>
            <Search><svg width="16" height="16" viewBox="0 0 16 16"><circle cx="6" cy="6" r="5" fill="none" stroke="#8da5c2" strokeWidth="2" /><path d="M10 10l5 5" stroke="#8da5c2" strokeWidth="2.500" /></svg></Search>
            <MenuBar>
              {menus.map((m, i) => <MenuTop key={m} $on={i === 0}>{m}</MenuTop>)}
              <Drop>
                {drop.map((d, i) => d === "-" ? <DropRule key={i} /> : (
                  <li key={i}><DropItem $on={d === "검사실"} $off={d === "N Talk"}><span>{d}</span></DropItem></li>
                ))}
              </Drop>
            </MenuBar>
          </Toolbar>
          <SectionBar $pad={24}>
            <Grip /><SectionTitle>진료</SectionTitle>
            {mainBtns.map(([t, w], i) => <Btn key={i} $w={w} $h={26} $r={0} $big>{t}</Btn>)}
          </SectionBar>
          <Content>
            <HistoryCol />
            <ChartCol />
            <WaitCol />
            <Strip><StripTab aria-label="펼치기"><svg width="6" height="11" viewBox="0 0 6 11"><path d="M6 0v11L0 5.500z" fill="#003a9c" /></svg></StripTab></Strip>
          </Content>
          <BottomBar>
            {footLabels.map((t, i) => <FootBtn key={t} $big><svg width="16" height="16" viewBox="0 0 16 16">{footArt[i]}</svg>{t}</FootBtn>)}
          </BottomBar>
          <ExamWindow />
        </Main>
      </Body>
    </Shell>
  );
}
